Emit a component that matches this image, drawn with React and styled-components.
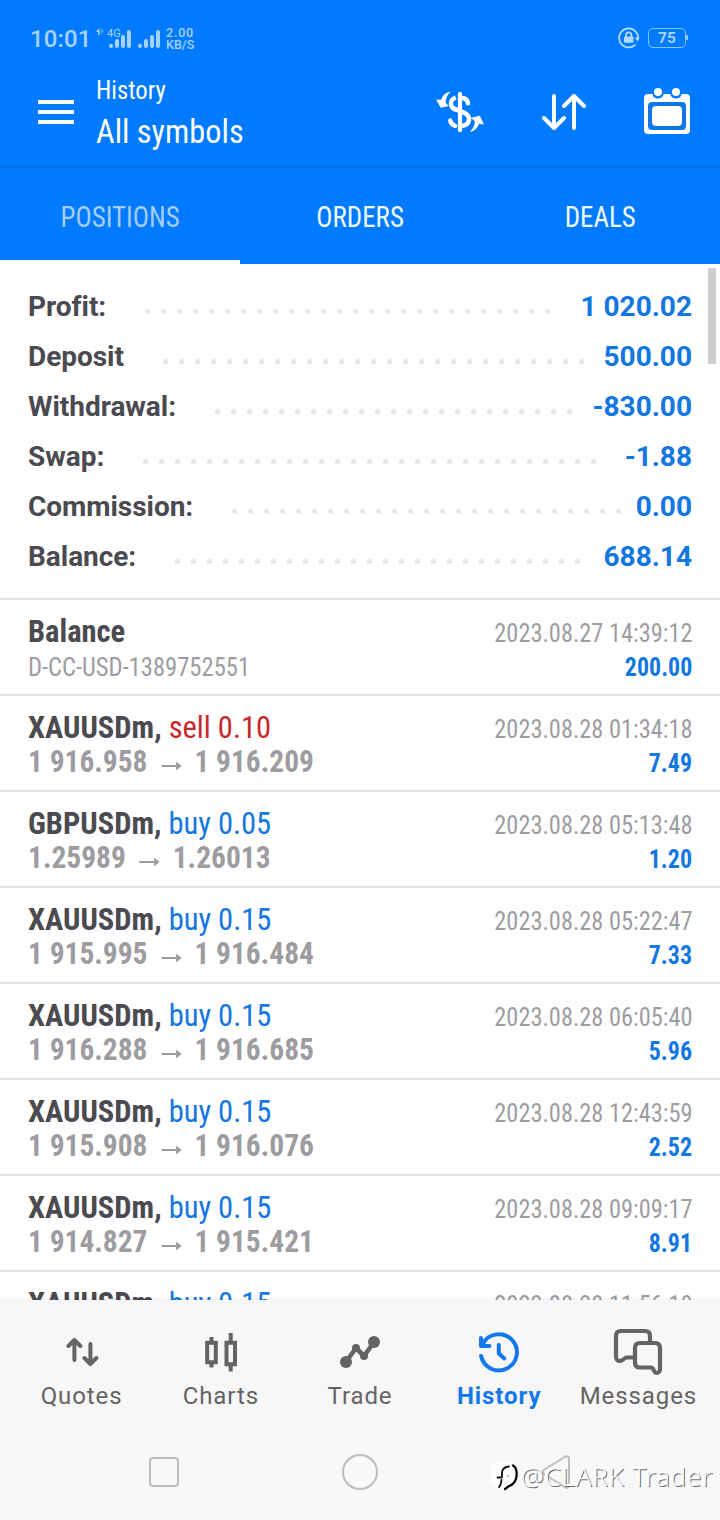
import React from 'react';
import styled, { createGlobalStyle } from 'styled-components';

const summary = [
  { label: 'Profit:', value: '1 020.02', dots: 26 },
  { label: 'Deposit', value: '500.00', dots: 27 },
  { label: 'Withdrawal:', value: '-830.00', dots: 23 },
  { label: 'Swap:', value: '-1.88', dots: 29 },
  { label: 'Commission:', value: '0.00', dots: 25 },
  { label: 'Balance:', value: '688.14', dots: 26 },
];

const positions = [
  { symbol: 'XAUUSDm', side: 'sell', volume: '0.10', open: '1 916.958', close: '1 916.209', time: '2023.08.28 01:34:18', profit: '7.49' },
  { symbol: 'GBPUSDm', side: 'buy', volume: '0.05', open: '1.25989', close: '1.26013', time: '2023.08.28 05:13:48', profit: '1.20' },
  { symbol: 'XAUUSDm', side: 'buy', volume: '0.15', open: '1 915.995', close: '1 916.484', time: '2023.08.28 05:22:47', profit: '7.33' },
  { symbol: 'XAUUSDm', side: 'buy', volume: '0.15', open: '1 916.288', close: '1 916.685', time: '2023.08.28 06:05:40', profit: '5.96' },
  { symbol: 'XAUUSDm', side: 'buy', volume: '0.15', open: '1 915.908', close: '1 916.076', time: '2023.08.28 12:43:59', profit: '2.52' },
  { symbol: 'XAUUSDm', side: 'buy', volume: '0.15', open: '1 914.827', close: '1 915.421', time: '2023.08.28 09:09:17', profit: '8.91' },
  { symbol: 'XAUUSDm', side: 'buy', volume: '0.15', open: '', close: '', time: '2023.08.28 11:56:18', profit: '' },
];

const SignalIcon = () => (
  <svg width="22" height="18" viewBox="0 0 22 18" fill="none" stroke="#a6d2ff" strokeWidth="4" strokeLinecap="round">
    <path d="M2 15.8v.2M8 11V16M14 7V16M20 2V16" />
  </svg>
);

const RotationLockIcon = () => (
  <svg width="22" height="22" viewBox="0 0 22 22" fill="none" stroke="#b4daff" strokeWidth="1.8">
    <path d="M17.4 17.6a9.5 9.5 0 1 1 2.6-5" />
    <path d="M16.5 10.5h5l-1.6 4z" fill="#b4daff" stroke="none" />
    <rect x="6" y="9.4" width="9.4" height="6.4" rx="1" fill="#b4daff" stroke="none" />
    <path d="M8 10V8a2.7 2.7 0 0 1 5.4 0v2" />
  </svg>
);

const DollarIcon = () => (
  <svg width="48" height="42" viewBox="0 0 48 42" fill="none">
    <path d="M24 2.8V39.2" stroke="#fff" strokeWidth="4.2" strokeLinecap="round" />
    <path d="M19.8 6.5C13.2 9 13.4 16.3 20 19" stroke="#fff" strokeWidth="4.4" />
    <path d="M26 7c3.6.2 5.6 2 6 5.4" stroke="#fff" strokeWidth="4.4" strokeLinecap="round" />
    <path d="M17 17.2L29 22.2c6.3 3.2 5.1 11.8-3 12.8" stroke="#fff" strokeWidth="4.6" />
    <path d="M14.3 29.5c.3 2.7 1.8 4.6 5 5.3" stroke="#fff" strokeWidth="4.4" strokeLinecap="round" />
    <path d="M14.5.8C10 1.3 6.8 4.3 5.2 8.8L0 8.4l4.8 8.4 8-1.8-3.2-3.2C9.6 7.4 11.2 4 14.5.8z" fill="#fff" />
    <path d="M33.8 40.8c4.4-.6 7.5-3.4 9.2-8l5 .6-4.2-8.6-8.8 2 3.8 3.4c0 4.2-1.9 7.8-5 10.6z" fill="#fff" />
  </svg>
);

const SortIcon = () => (
  <svg width="44" height="36" viewBox="0 0 44 36" fill="none" stroke="#fff" strokeWidth="4" strokeLinecap="round" strokeLinejoin="round">
    <path d="M12 2v31M2 24l10 10 10-10M32 34V3M22 12L32 2l10 10" />
  </svg>
);

const CalendarIcon = () => (
  <svg width="46" height="46" viewBox="0 0 46 46">
    <path d="M4 6H8.5C9 12 19 12 19.5 6h7C27 12 37 12 37.5 6H42a4 4 0 0 1 4 4v32a4 4 0 0 1-4 4H4a4 4 0 0 1-4-4V10a4 4 0 0 1 4-4z" fill="#fff" />
    <rect x="4" y="14" width="38" height="28" rx="4" fill="#1277e6" />
    <rect x="8" y="18" width="30" height="20" rx="4" fill="#fff" />
    <circle cx="14" cy="4" r="4" fill="#fff" />
    <circle cx="32" cy="4" r="4" fill="#fff" />
  </svg>
);

const QuotesIcon = () => (
  <svg width="34" height="48" viewBox="0 0 34 48" fill="none" stroke="#646464" strokeWidth="4" strokeLinecap="round" strokeLinejoin="round">
    <path d="M9.4 32V12M3.4 18l6-6 6 6M25.4 16v20M19.4 30l6 6 6-6" />
  </svg>
);

const ChartsIcon = () => (
  <svg width="34" height="48" viewBox="0 0 34 48" fill="none" stroke="#646464" strokeWidth="4">
    <path d="M7.5 9v4M7.5 35v4.500M26.7 5v8M26.7 37v6.500" />
    <path d="M3.2 14.8H11.8V34.3H3.2zM22.5 14.8H31V36.3H22.5z" />
  </svg>
);

const TradeIcon = () => (
  <svg width="40" height="48" viewBox="0 0 40 48" fill="#646464">
    <path d="M6 34L16 20 24 28 34 14" fill="none" stroke="#646464" strokeWidth="4.6" />
    <circle cx="6" cy="34" r="6" />
    <circle cx="16" cy="20" r="4" />
    <circle cx="24" cy="28" r="4" />
    <circle cx="34" cy="14" r="6" />
  </svg>
);

const HistoryIcon = () => (
  <svg width="42" height="48" viewBox="0 0 42 48" fill="none" stroke="#1279ec" strokeWidth="4" strokeLinecap="round" strokeLinejoin="round">
    <path d="M5 15.5A18.1 18.1 0 1 1 3.1 28" />
    <path d="M3 10v8h8.5" />
    <path d="M20.8 17v8.5l5.5 5" />
  </svg>
);

const MessagesIcon = () => (
  <svg width="50" height="48" viewBox="0 0 50 48" fill="none" stroke="#646464" strokeWidth="4.2" strokeLinejoin="round" strokeLinecap="round">
    <path d="M20 29.5H14c-3 0-4 3.5-7 3.5-2.5 0-4-2-4-4V8q0-5 5-5H32q5 0 5 5v6" />
    <path d="M27 15H42q5 0 5 5V41c0 2.5-1.5 4-3.5 4-3 0-2.5-5.5-5.5-5.5H27q-5 0-5-5V20q0-5 5-5z" />
  </svg>
);

const BackIcon = () => (
  <svg width="30" height="36" viewBox="0 0 30 36" fill="none" stroke="#bdbdbd" strokeWidth="2" strokeLinejoin="round">
    <path d="M24.5 2.5L3.5 15.5q-3 2.5 0 5L24.5 33.5q3.5 1 3.5-2.5V5q0-3.5-3.5-2.5z" />
  </svg>
);

const WatermarkLogo = () => (
  <svg width="28" height="30" viewBox="0 0 28 30" fill="none" strokeLinecap="round">
    <rect x="0" y="0" width="26" height="26" rx="8" fill="#fff" />
    <path d="M8 25q2-2 2.500-7M6.500 15.500h4M11 15V10q1-5 7-5.500" stroke="#111" strokeWidth="1.8" />
    <path d="M22 3.500q4.500 2.500 3.500 11Q24.500 22 18 24l-4 3" stroke="#000" strokeWidth="2.2" />
    <circle cx="17" cy="14" r=".8" fill="#777" />
  </svg>
);

const tabs = [
  { name: 'Quotes', icon: <QuotesIcon /> },
  { name: 'Charts', icon: <ChartsIcon /> },
  { name: 'Trade', icon: <TradeIcon /> },
  { name: 'History', icon: <HistoryIcon />, active: true },
  { name: 'Messages', icon: <MessagesIcon /> },
];

const App = () => {
  return (
    <Screen>
      <GlobalStyle />
      <StatusBar>
        <Clock>10:01</Clock>
        <DataArrows width="8" height="8" viewBox="0 0 8 8">
          <path d="M3.5 0v7H2V4H0z" fill="#b4daff" />
          <path d="M5 0v7l3-4z" fill="#4a9fff" />
        </DataArrows>
        <MobileSignal>
          <NetworkLabel>4G</NetworkLabel>
          <SignalIcon />
        </MobileSignal>
        <SecondSignal><SignalIcon /></SecondSignal>
        <Speed>
          <span>2.00</span>
          <span>KB/S</span>
        </Speed>
        <StatusRight>
          <RotationLockIcon />
          <Battery>75</Battery>
        </StatusRight>
      </StatusBar>

      <Header>
        <MenuButton aria-label="Menu"><i /><i /><i /></MenuButton>
        <Titles>
          <Subtitle>History</Subtitle>
          <Title>All symbols</Title>
        </Titles>
        <Actions>
          <DollarIcon />
          <SortIcon />
          <CalendarIcon />
        </Actions>
      </Header>

      <Tabs>
        <Tab $active><TabText>POSITIONS</TabText></Tab>
        <Tab><TabText>ORDERS</TabText></Tab>
        <Tab><TabText>DEALS</TabText></Tab>
      </Tabs>

      <Content>
        <ScrollThumb />
        <Summary>
          {summary.map((item) => (
            <SummaryRow key={item.label}>
              <SummaryLabel>{item.label}</SummaryLabel>
              <Dots>
                {Array.from({ length: item.dots }, (_, i) => <Dot key={i} />)}
              </Dots>
              <SummaryValue>{item.value}</SummaryValue>
            </SummaryRow>
          ))}
        </Summary>

        <Deal>
          <DealLine>
            <Symbol>Balance</Symbol>
            <Time>2023.08.27 14:39:12</Time>
          </DealLine>
          <CommentLine>
            <Comment>D-CC-USD-1389752551</Comment>
            <Profit>200.00</Profit>
          </CommentLine>
        </Deal>
        {positions.map((p) => (
          <Deal key={p.time}>
            <DealLine>
              <Symbol>
                {p.symbol}, <Side $sell={p.side === 'sell'}>{p.side} {p.volume}</Side>
              </Symbol>
              <Time>{p.time}</Time>
            </DealLine>
            {p.open && (
              <DealLine>
                <Prices>
                  {p.open}
                  <PriceArrow width="24" height="12" viewBox="0 0 24 12">
                    <path d="M1 6h20" />
                    <path d="M17 1.500l6 4.500-6 4.500z" />
                  </PriceArrow>
                  {p.close}
                </Prices>
                <Profit>{p.profit}</Profit>
              </DealLine>
            )}
          </Deal>
        ))}
      </Content>

      <BottomBar>
        {tabs.map((tab) => (
          <BottomItem key={tab.name} $active={tab.active}>
            <BottomIcon>{tab.icon}</BottomIcon>
            <span>{tab.name}</span>
          </BottomItem>
        ))}
      </BottomBar>

      <SystemNav>
        <RecentsKey />
        <HomeKey />
        <BackIcon />
        <Watermark>
          <WatermarkLogo />
          <WatermarkText>@CLARK Trader</WatermarkText>
        </Watermark>
      </SystemNav>
    </Screen>
  );
};

export default App;

const GlobalStyle = createGlobalStyle`
  * {
    box-sizing: border-box;
  }

  body {
    margin: 0;
    background: #fff;
    font-family: Roboto, sans-serif;
  }

  svg {
    display: block;
    flex: none;
  }
`;

const condensed = '"Roboto Condensed", Roboto, sans-serif';

const Screen = styled.div`
  width: 720px;
  height: 1520px;
  display: flex;
  flex-direction: column;
  overflow: hidden;
  background: #fff;
`;

const StatusBar = styled.div`
  height: 76px;
  flex: none;
  display: flex;
  align-items: center;
  padding: 2px 34px 0 30px;
  background: #007aff;
  color: #a6d2ff;
`;

const Clock = styled.span`
  width: 66px;
  font-size: 24px;
  font-weight: 500;
  letter-spacing: 0.1px;
`;

const DataArrows = styled.svg`
  margin-top: -14px;
`;

const MobileSignal = styled.div`
  position: relative;
  margin-left: 5px;
`;

const NetworkLabel = styled.span`
  position: absolute;
  top: -2px;
  left: -2px;
  font-size: 11px;
  line-height: 11px;
`;

const SecondSignal = styled.div`
  margin-left: 7px;
`;

const Speed = styled.div`
  display: flex;
  flex-direction: column;
  margin-left: 6px;
  font-size: 12.5px;
  font-weight: 500;
  line-height: 12.5px;

  span:first-child {
    letter-spacing: 0.8px;
  }
`;

const StatusRight = styled.div`
  display: flex;
  align-items: center;
  gap: 8px;
  margin: -2px 0 0 auto;
`;

const Battery = styled.div`
  position: relative;
  width: 38px;
  height: 20px;
  border: 1.5px solid #8ac6ff;
  border-radius: 5px;
  font-size: 15.5px;
  font-weight: 700;
  line-height: 18px;
  text-align: center;

  &::after {
    content: '';
    position: absolute;
    top: 6px;
    right: -3px;
    width: 2px;
    height: 5px;
    background: #8ac6ff;
  }
`;

const Header = styled.header`
  height: 92px;
  flex: none;
  display: flex;
  padding: 0 30px 0 38px;
  border-bottom: 2px solid #0070ea;
  background: #007aff;
  color: #fff;
`;

const MenuButton = styled.button`
  width: 36px;
  padding: 24px 0 0;
  display: flex;
  flex-direction: column;
  gap: 6px;
  border: 0;
  background: none;

  i {
    width: 36px;
    height: 4px;
    background: #fff;
  }
`;

const Titles = styled.div`
  margin: -1px 0 0 22px;
  font-family: ${condensed};
  transform: scaleX(0.95);
  transform-origin: left;
`;

const Subtitle = styled.div`
  font-size: 26px;
  line-height: 30px;
`;

const Title = styled.div`
  margin-top: 6px;
  font-size: 34px;
  line-height: 40px;
`;

const Actions = styled.div`
  display: flex;
  align-items: center;
  gap: 58px;
  margin-left: auto;
  padding-bottom: 20px;

  svg:first-child,
  svg:nth-child(2) {
    margin-top: 2px;
  }
`;

const Tabs = styled.nav`
  height: 96px;
  flex: none;
  display: flex;
  background: #007aff;
`;

const Tab = styled.div`
  flex: 1;
  border-bottom: 4px solid ${(props) => (props.$active ? '#fff' : 'transparent')};
  color: ${(props) => (props.$active ? '#a6cdf8' : '#f0faff')};
  font-family: ${condensed};
  font-size: 29px;
  line-height: 99px;
  text-align: center;
`;

const TabText = styled.span`
  display: inline-block;
  transform: scaleX(0.93);
`;

const Content = styled.main`
  position: relative;
  height: 1036px;
  flex: none;
  overflow: hidden;
`;

const ScrollThumb = styled.div`
  position: absolute;
  top: 4px;
  right: 4px;
  width: 8px;
  height: 96px;
  background: #cdcdcd;
`;

const Summary = styled.section`
  height: 336px;
  padding: 17px 28px 0;
  border-bottom: 2px solid #e3e3e3;
`;

const SummaryRow = styled.div`
  height: 50px;
  display: flex;
  align-items: center;
  font-size: 28px;
  font-weight: 700;
`;

const SummaryLabel = styled.span`
  color: #4a4a50;
  letter-spacing: -0.04px;
`;

const Dots = styled.div`
  flex: 1;
  height: 5px;
  display: flex;
  gap: 11px;
  margin: 10px 0 0 39px;
`;

const Dot = styled.i`
  width: 5px;
  height: 5px;
  flex: none;
  border-radius: 50%;
  background: #e6e6e6;
`;

const SummaryValue = styled.span`
  color: #1277e0;
`;

const Deal = styled.section`
  height: 96px;
  padding: 12px 28px 0;
  border-bottom: 2px solid #e3e3e3;
  font-family: ${condensed};
`;

const DealLine = styled.div`
  height: 34px;
  display: flex;
  align-items: baseline;
  justify-content: space-between;
  line-height: 38px;
  white-space: pre;
`;

const CommentLine = styled(DealLine)`
  padding-top: 2px;
`;

const Symbol = styled.span`
  color: #4a4a50;
  font-size: 32px;
  font-weight: 700;
  transform: scaleX(0.953);
  transform-origin: left;
`;

const Side = styled.span`
  color: ${(props) => (props.$sell ? '#c8282a' : '#1277e0')};
  font-weight: 400;
`;

const Time = styled.span`
  margin-right: -0.5px;
  color: #9d9da1;
  font-size: 26px;
  transform: scaleX(0.937);
  transform-origin: right;
`;

const Comment = styled.span`
  color: #9d9da1;
  font-size: 26px;
  transform: scaleX(0.945);
  transform-origin: left;
`;

const Prices = styled.span`
  display: flex;
  align-items: center;
  color: #9d9da1;
  font-size: 32px;
  font-weight: 700;
  transform: scaleX(0.92);
  transform-origin: left;
`;

const PriceArrow = styled.svg`
  margin: 9px 13px 0 14px;
  fill: #9d9da1;

  path:first-child {
    stroke: #9d9da1;
    stroke-width: 2;
  }
`;

const Profit = styled.span`
  color: #1277e0;
  font-size: 26px;
  font-weight: 700;
  transform: scaleX(0.92);
  transform-origin: right;
`;

const BottomBar = styled.nav`
  position: relative;
  height: 124px;
  flex: none;
  display: flex;
  padding: 28px 12px 0;
  background: #f7f7f7;
  box-shadow: 0 -1px 3px rgba(0, 0, 0, 0.08);
`;

const BottomItem = styled.div`
  flex: 1;
  display: flex;
  flex-direction: column;
  align-items: center;
  color: ${(props) => (props.$active ? '#1279ec' : '#646464')};
  font-size: 24px;
  font-weight: ${(props) => (props.$active ? 700 : 400)};
  letter-spacing: 0.9px;
  line-height: 32px;
`;

const BottomIcon = styled.div`
  height: 52px;
`;

const SystemNav = styled.footer`
  position: relative;
  height: 96px;
  flex: none;
  display: flex;
  align-items: center;
  justify-content: space-between;
  padding: 0 149px;
  background: #f8f8f8;
`;

const RecentsKey = styled.div`
  width: 30px;
  height: 30px;
  border: 2px solid #bdbdbd;
  border-radius: 4px;
`;

const HomeKey = styled.div`
  width: 36px;
  height: 36px;
  border: 2px solid #bdbdbd;
  border-radius: 50%;
`;

const Watermark = styled.div`
  position: absolute;
  top: 38px;
  right: 7px;
  display: flex;
  align-items: center;
  gap: 2px;
`;

const WatermarkText = styled.span`
  margin-top: -2px;
  color: #fbfbfb;
  font-family: "Noto Sans", sans-serif;
  font-size: 26px;
  font-weight: 300;
  letter-spacing: 0.75px;
  line-height: 28px;
  text-shadow: 1px 1px 0.5px #666, -1px -1px 0 #fff;
`;
